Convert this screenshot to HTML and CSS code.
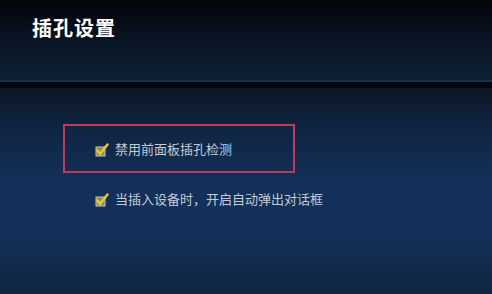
FILE: index.html
```html
<!DOCTYPE html>
<html lang="zh">
<head>
<meta charset="utf-8">
<link rel="stylesheet" href="styles.css">
</head>
<body>
<div class="panel">
  <header class="header">
    <h1 class="title">插孔设置</h1>
  </header>
  <div class="divider"></div>
  <main class="content">
    <div class="option highlighted">
      <span class="check">
        <svg width="14" height="14" viewBox="0 0 14 14">
          <rect x="1" y="4" width="9" height="9" fill="#8a8a5a" stroke="#c8c8b0" stroke-width="1"/>
          <path d="M2.5 7.5 L5 11 L12.5 1.5" fill="none" stroke="#f0c830" stroke-width="2.4" stroke-linecap="round" stroke-linejoin="round"/>
        </svg>
      </span>
      <span class="label">禁用前面板插孔检测</span>
    </div>
    <div class="option">
      <span class="check">
        <svg width="14" height="14" viewBox="0 0 14 14">
          <rect x="1" y="4" width="9" height="9" fill="#8a8a5a" stroke="#c8c8b0" stroke-width="1"/>
          <path d="M2.5 7.5 L5 11 L12.5 1.5" fill="none" stroke="#f0c830" stroke-width="2.4" stroke-linecap="round" stroke-linejoin="round"/>
        </svg>
      </span>
      <span class="label">当插入设备时，开启自动弹出对话框</span>
    </div>
  </main>
</div>
</body>
</html>
```

FILE: styles.css
```css
html, body {
  margin: 0;
  padding: 0;
}
body {
  width: 492px;
  height: 294px;
  overflow: hidden;
  font-family: "Noto Sans CJK SC", "Liberation Sans", sans-serif;
}
.panel {
  width: 492px;
  height: 294px;
  display: flex;
  flex-direction: column;
  background: #13305a;
}
.header {
  height: 80px;
  box-sizing: border-box;
  padding: 15px 0 0 32px;
  background: linear-gradient(to bottom, #030408 0%, #060b16 25%, #0a1626 55%, #0d1f36 100%);
}
.title {
  margin: 0;
  font-size: 20px;
  font-weight: bold;
  line-height: 26px;
  color: #ffffff;
  letter-spacing: 1px;
}
.divider {
  height: 8px;
  background: linear-gradient(to bottom, #18304a 0px, #18304a 2px, #02040a 2px, #03070e 8px);
}
.content {
  flex: 1;
  display: flex;
  flex-direction: column;
  gap: 11px;
  padding: 36px 0 0 63px;
  background: linear-gradient(to bottom, #0a1626 0%, #0f2440 18%, #13305a 45%, #14315a 70%, #0f2441 100%);
}
.option {
  display: flex;
  align-items: center;
  gap: 6px;
  height: 49px;
  box-sizing: border-box;
  padding-left: 32px;
  width: 232px;
}
.option + .option {
  height: 28px;
}
.highlighted {
  border: 2px solid #c23a5a;
  padding-left: 30px;
}
.check {
  display: flex;
  width: 14px;
  height: 14px;
  margin-top: 3px;
}
.label {
  font-size: 13px;
  color: #c3ccd6;
  white-space: nowrap;
}
```
